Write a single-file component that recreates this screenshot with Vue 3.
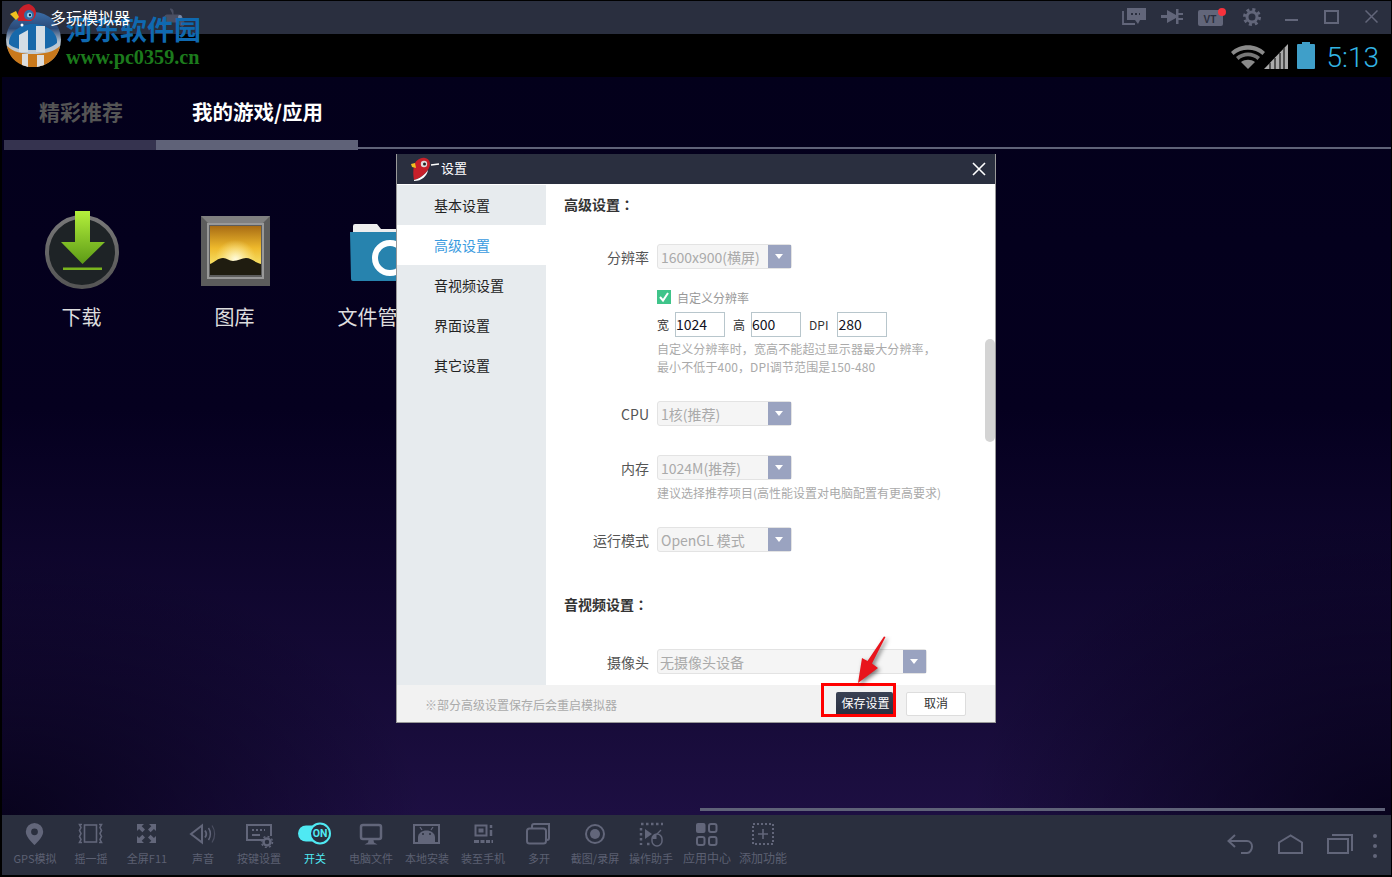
<script setup>
const menu = ['基本设置', '高级设置', '音视频设置', '界面设置', '其它设置']

const apps = ['下载', '图库', '文件管理器']

const tools = [
  { label: 'GPS模拟', svg: '<path fill-rule="evenodd" fill="#62667a" d="M27.5 3a8.7 8.7 0 0 1 8.7 8.7c0 5.6-8.7 13.3-8.7 13.3s-8.7-7.7-8.7-13.3A8.7 8.7 0 0 1 27.5 3zm0 5.4a3.4 3.4 0 1 0 0 6.8 3.4 3.4 0 0 0 0-6.8z"/>' },
  { label: '摇一摇', svg: '<g fill="none" stroke="#62667a" stroke-width="1.6"><rect x="21.5" y="5" width="12" height="17"/><path d="M19 4.500h-2.500l1.500 3-1.500 3 1.500 3-1.500 3 1.500 3-1.500 3H19M36 4.500h2.500l-1.500 3 1.500 3-1.500 3 1.500 3-1.500 3 1.500 3H36"/></g>' },
  { label: '全屏F11', svg: '<path fill="#62667a" d="M18 4h7l-2.300 2.300 3.300 3.300-2.600 2.600-3.300-3.300L18 11zM37 4h-7l2.300 2.300-3.300 3.300 2.600 2.600 3.300-3.300L37 11zM18 23h7l-2.300-2.300 3.300-3.300-2.600-2.600-3.300 3.300L18 16zM37 23h-7l2.300-2.300 -3.300-3.300 2.600-2.600 3.300 3.300L37 16z"/>' },
  { label: '声音', svg: '<g fill="none" stroke="#62667a"><path stroke-width="2" d="M16 14l11-8.500v17z"/><path stroke-width="1.800" d="M30 10.500c1.500 2 1.500 5 0 7"/><path stroke-width="1.500" d="M33.500 8c2.500 3.500 2.500 8.500 0 12"/><path stroke-width="1.200" stroke="#4a4e60" d="M37 5.500c3.500 5 3.500 12 0 17"/></g>' },
  { label: '按键设置', svg: '<g fill="none" stroke="#62667a" stroke-width="2"><path d="M33 20H16V5h24v11"/></g><path stroke="#62667a" stroke-width="2" stroke-dasharray="2 2" d="M21 10h13"/><path stroke="#62667a" stroke-width="2" d="M21 15h8"/><circle cx="36" cy="22" r="3.500" fill="none" stroke="#62667a" stroke-width="2.500"/><circle cx="36" cy="22" r="5.500" fill="none" stroke="#62667a" stroke-width="1.500" stroke-dasharray="2 2.300"/>' },
  { label: '开关', active: true, svg: '<rect x="11" y="5.500" width="24" height="16" rx="8" fill="#4fe9f3"/><circle cx="33" cy="13.500" r="10" fill="#2a2f3e" stroke="#4fe9f3" stroke-width="2"/><text x="33" y="17.300" text-anchor="middle" font-size="10.500" font-weight="700" font-family="Roboto, sans-serif" fill="#4fe9f3">ON</text>' },
  { label: '电脑文件', svg: '<rect x="18" y="5" width="20" height="14" rx="2" fill="none" stroke="#62667a" stroke-width="2.500"/><path fill="#62667a" d="M25.500 20h5l.5 2.500 3.500 2h-13l3.500-2z"/>' },
  { label: '本地安装', svg: '<rect x="15" y="5" width="25" height="18" fill="none" stroke="#62667a" stroke-width="2"/><path fill="#62667a" d="M19 17c.5-4 4-6.500 8.500-6.500s8 2.500 8.500 6.500v5H19z"/><path stroke="#62667a" stroke-width="1.300" d="M23 10l-2-3M32 10l2-3"/><circle cx="24" cy="14" r="1" fill="#2a2f3e"/><circle cx="31" cy="14" r="1" fill="#2a2f3e"/>' },
  { label: '装至手机', svg: '<rect x="20.500" y="5.500" width="11" height="10" fill="none" stroke="#62667a" stroke-width="2"/><rect x="23.500" y="8.500" width="5" height="4" fill="#62667a"/><path stroke="#62667a" stroke-width="2.500" d="M36 5v3M36 10v6"/><path stroke="#62667a" stroke-width="3" stroke-dasharray="5 1.500 4 1.500 4 1.500" d="M19 21.500h19"/>' },
  { label: '多开', svg: '<g fill="none" stroke="#62667a" stroke-width="2"><path d="M21 8V6a2 2 0 0 1 2-2h15v14a2 2 0 0 1-2 2h-1"/><rect x="16" y="8.500" width="19" height="15" rx="2.500"/></g>' },
  { label: '截图/录屏', svg: '<circle cx="28" cy="14" r="9" fill="none" stroke="#62667a" stroke-width="2"/><circle cx="28" cy="14" r="5" fill="#62667a"/>' },
  { label: '操作助手', svg: '<path stroke="#62667a" stroke-width="2.500" stroke-dasharray="2.500 2.500" fill="none" d="M18 4h22M18 8v17M24 24h4"/><path fill="#62667a" d="M22 9l7 5-7 5z"/><rect x="29" y="14" width="10" height="12" rx="5" fill="#2a2f3e" stroke="#62667a" stroke-width="1.500"/><path fill="#62667a" d="M29.500 19v-1a4.500 4.500 0 0 1 4-4.300V19z"/><path stroke="#62667a" stroke-width="1.300" d="M34 14l4-4"/>' },
  { label: '应用中心', big: true, svg: '<rect x="17" y="3" width="9.500" height="10" rx="2" fill="#62667a"/><g fill="none" stroke="#62667a" stroke-width="2"><rect x="30" y="4" width="7.500" height="8" rx="2"/><rect x="18" y="17" width="7.500" height="8" rx="2"/><rect x="30" y="17" width="7.500" height="8" rx="2"/></g>' },
  { label: '添加功能', big: true, svg: '<rect x="18" y="4" width="20" height="20" fill="none" stroke="#62667a" stroke-width="2" stroke-dasharray="2 2"/><path stroke="#62667a" stroke-width="1.600" d="M28 9v10M23 14h10"/>' }
]
</script>

<template>
  <div class="app">
    <header class="titlebar">
      <span class="app-name">多玩模拟器</span>
      <svg class="pad" width="24" height="20" viewBox="0 0 24 20">
        <path fill="#4a4f63" d="M6 7h12c3 0 5 5 5 9 0 3-3 3-5 0l-1-2H7l-1 2c-2 3-5 3-5 0 0-4 2-9 5-9zM12 7V3c0-2-2-2-3-2" stroke="#4a4f63"/>
        <circle cx="19" cy="9" r="2" fill="#7b8ba8"/>
      </svg>
      <div class="win-ctl">
        <svg width="24" height="17" viewBox="0 0 24 17">
          <path fill="none" stroke="#62667a" stroke-width="1.800" d="M1 3v13h12"/>
          <path fill="#62667a" d="M5 0h19v12h-6l-2 4-3-4H5z"/>
          <path stroke="#2a2f3f" stroke-width="2" stroke-dasharray="2 2" d="M9 6h9"/>
        </svg>
        <svg class="m15" width="22" height="17" viewBox="0 0 22 17">
          <path fill="#62667a" d="M0 7h6V2l9 5V1h2.500v15H15v-6l-9 5v-5H0zM17.500 5H22v2h-4.500zM17.500 10H22v2h-4.500z"/>
        </svg>
        <svg class="m15" width="28" height="18" viewBox="0 0 28 18">
          <rect y="2" width="25" height="16" rx="2" fill="#62667a"/>
          <text x="12" y="15" text-anchor="middle" font-size="10" font-weight="700" font-family="Liberation Sans, sans-serif" fill="#2a2f3f">VT</text>
          <circle cx="24" cy="4" r="4" fill="#f6323c"/>
        </svg>
        <svg class="m17" width="18" height="18" viewBox="0 0 18 18">
          <circle cx="9" cy="9" r="5" fill="none" stroke="#62667a" stroke-width="3"/>
          <circle cx="9" cy="9" r="7.500" fill="none" stroke="#62667a" stroke-width="3" stroke-dasharray="3 2.900"/>
        </svg>
        <span class="min"></span>
        <span class="max"></span>
        <svg class="close" width="13" height="13" viewBox="0 0 13 13">
          <path stroke="#62667a" stroke-width="1.500" d="M.5.5l12 12M12.500.5l-12 12"/>
        </svg>
      </div>
    </header>

    <div class="statusbar">
      <svg width="57" height="28" viewBox="0 0 57 28">
        <path fill="#8a8a8a" d="M0 10C9 1 25 1 34 10l-2.500 3C24 6 10 6 2.500 13z"/>
        <path fill="#777" d="M5 15c7-6 17-6 24 0l-2.500 3c-5-5-14-5-19 0z"/>
        <path fill="#8a8a8a" d="M10 20c4-3 10-3 14 0l-7 7z"/>
        <path fill="#aaa" d="M33 27L57 2v25z"/>
        <path stroke="#333" stroke-width="1.500" d="M39 27v-6M44 27V16M49 27V11M53 27V6"/>
      </svg>
      <svg class="battery" width="18" height="27" viewBox="0 0 18 27">
        <path fill="#3f9fc9" d="M5 0h8v2h4a1 1 0 0 1 1 1v23a1 1 0 0 1-1 1H1a1 1 0 0 1-1-1V3a1 1 0 0 1 1-1h4z"/>
      </svg>
      <span class="clock">5:13</span>
    </div>

    <main class="android">
      <nav class="tabs">
        <div class="tab tab-off">精彩推荐</div>
        <div class="tab tab-on">我的游戏/应用</div>
        <div class="tab-line"></div>
      </nav>

      <div class="desktop">
        <div v-for="(name, i) in apps" :key="name" class="desk-app">
          <svg v-if="i === 0" width="80" height="80" viewBox="0 0 80 80">
            <defs>
              <linearGradient id="ring" x1="0" y1="0" x2="0" y2="1">
                <stop offset="0" stop-color="#777"/>
                <stop offset="1" stop-color="#555"/>
              </linearGradient>
              <linearGradient id="arrow" x1="0" y1="0" x2="0" y2="1">
                <stop offset="0" stop-color="#b4f03c"/>
                <stop offset="1" stop-color="#5c9a16"/>
              </linearGradient>
            </defs>
            <circle cx="40" cy="42" r="35" fill="#1e2326" stroke="url(#ring)" stroke-width="4"/>
            <path fill="url(#arrow)" d="M33 1h15v31h15L40.500 54 19 32h14z"/>
            <rect x="21" y="57.500" width="39" height="2.500" fill="#7ab51e"/>
          </svg>
          <svg v-else-if="i === 1" width="80" height="80" viewBox="0 0 80 80">
            <defs>
              <linearGradient id="sky" x1="0" y1="0" x2="0" y2="1">
                <stop offset="0" stop-color="#a86c14"/>
                <stop offset=".45" stop-color="#eeb92c"/>
                <stop offset=".75" stop-color="#f6dc60"/>
              </linearGradient>
              <radialGradient id="sun" cx=".5" cy=".68" r=".4">
                <stop offset="0" stop-color="#fffbe0"/>
                <stop offset="1" stop-color="#fff3a0" stop-opacity="0"/>
              </radialGradient>
            </defs>
            <rect x="6" y="6" width="69" height="70" fill="#5c5c5c"/>
            <path fill="#808080" d="M6 6h69l-9 9H15z"/>
            <rect x="13" y="14" width="55" height="54" fill="none" stroke="#999" stroke-width="2"/>
            <rect x="15" y="16" width="51" height="49" fill="url(#sky)"/>
            <rect x="15" y="16" width="51" height="49" fill="url(#sun)"/>
            <path fill="#1f1c10" d="M15 54c5-2 8-6 13-6 4 0 6 3 10 3 5 0 9-3 13-3 5 0 10 5 15 6v11H15z"/>
          </svg>
          <svg v-else width="80" height="80" viewBox="0 0 80 80">
            <path fill="#eee" d="M5 22v-6a2 2 0 0 1 2-2h22l4 5h30v5H5z"/>
            <path fill="#2783ae" d="M2 22h76v47a2 2 0 0 1-2 2H5a2 2 0 0 1-2-2z"/>
            <circle cx="42" cy="48" r="15" fill="none" stroke="#fff" stroke-width="6"/>
          </svg>
          <span class="desk-label">{{ name }}</span>
        </div>
      </div>

      <div class="pager"></div>
    </main>

    <footer class="toolbar">
      <div class="tools">
        <div v-for="t in tools" :key="t.label" class="tool" :class="{ on: t.active, big: t.big }">
          <svg width="56" height="28" viewBox="0 0 56 28" v-html="t.svg"></svg>
          <span>{{ t.label }}</span>
        </div>
      </div>
      <div class="nav-keys">
        <svg width="27" height="20" viewBox="0 0 27 20">
          <path fill="none" stroke="#62667a" stroke-width="2" d="M8 1L1.500 7 8 13M2 7h18c3 0 5 2.500 5 5.500S23 19 20 19h-6"/>
        </svg>
        <svg class="k-home" width="25" height="20" viewBox="0 0 25 20">
          <path fill="none" stroke="#62667a" stroke-width="2" d="M12.500 1.500L1 8.500V19h23V8.500z"/>
        </svg>
        <svg class="k-recent" width="26" height="20" viewBox="0 0 26 20">
          <path fill="none" stroke="#62667a" stroke-width="2" d="M5 1h20v16"/>
          <rect x="1" y="5" width="20" height="14" fill="none" stroke="#62667a" stroke-width="2"/>
        </svg>
        <div class="dots"><i></i><i></i><i></i></div>
      </div>
    </footer>

    <!-- 水印盖在标题栏上 -->
    <div class="watermark">
      <svg class="wm-logo" width="58" height="57" viewBox="0 0 58 57">
        <defs>
          <linearGradient id="cap" x1="0" y1="0" x2="0" y2="1">
            <stop offset="0" stop-color="#3a6da8"/>
            <stop offset=".3" stop-color="#2c4a78"/>
            <stop offset=".55" stop-color="#b9c6d2"/>
            <stop offset="1" stop-color="#c8d0d8"/>
          </linearGradient>
        </defs>
        <circle cx="28.500" cy="28.500" r="27.500" fill="url(#cap)"/>
        <path fill="#c9791c" d="M2 35c6 6 15 8 26 8s21-2 27-8c-2 12-13 21-27 21S4 47 2 35z"/>
        <path fill="#1768aa" d="M4 33c-1-10 10-20 24-20s25 9 24 19c-6 5-14 7-24 7S9 38 4 33z"/>
        <path fill="#d4dde5" d="M14 24l9-5v22h-9zM31 15h9v26h-9z"/>
        <path fill="#ddd" d="M17 43h6v13l-6-2zM32 44h7v10l-7 2z"/>
        <circle cx="17" cy="14" r="1.500" fill="#fff"/>
      </svg>
      <div class="wm-text">
        <span class="wm-cn">河东软件园</span>
        <span class="wm-url">www.pc0359.cn</span>
      </div>
    </div>

    <svg class="t-bird" width="28" height="20" viewBox="0 0 28 20">
      <path fill="#c8202a" d="M9 10C10 5 15 1 20 1c3 1 7 4 7 9 0 3-2 6-5 8H9z"/>
      <path fill="#f0c020" d="M1 11l6-3 3 6-3 3z"/>
      <circle cx="20" cy="12" r="5" fill="#2f6fa8"/>
      <circle cx="20.500" cy="12" r="2.500" fill="#9fd0ee"/>
      <circle cx="21" cy="12" r="1.200" fill="#123"/>
    </svg>

    <section class="dialog">
      <div class="dlg-head">
        <svg width="30" height="24" viewBox="0 0 30 24">
          <path fill="#c8202a" d="M3 9c1-5 6-9 11-8 3 .5 5 3 5 6 0 6-8 14-16 16C2 18 2 13 3 9z"/>
          <path fill="#f0c020" d="M0 7l4-1 1 5-4-1z"/>
          <path fill="#fff" d="M3 23c5-1 11-5 14-10-1 6-6 11-14 11z"/>
          <circle cx="13" cy="7" r="3.200" fill="#ddd"/>
          <circle cx="13.500" cy="7" r="1.500" fill="#222"/>
          <path stroke="#fff" stroke-width="1.500" d="M20 8l8-1"/>
        </svg>
        <span class="dlg-title">设置</span>
        <svg class="dlg-close" width="14" height="14" viewBox="0 0 14 14">
          <path stroke="#fff" stroke-width="1.600" d="M1 1l12 12M13 1L1 13"/>
        </svg>
      </div>

      <div class="dlg-body">
        <ul class="side">
          <li v-for="(m, i) in menu" :key="m" :class="{ cur: i === 1 }">{{ m }}</li>
        </ul>

        <div class="pane">
          <h4 class="h-first">高级设置<span class="colon">：</span></h4>

          <div class="row r-res">
            <label>分辨率</label>
            <div class="sel"><span>1600x900(横屏)</span><b></b></div>
          </div>

          <div class="sub">
            <div class="check">
              <svg width="14" height="14" viewBox="0 0 14 14">
                <rect width="14" height="14" fill="#3fc48a"/>
                <path fill="none" stroke="#fff" stroke-width="2" d="M3 7l3 3.500L11 3"/>
              </svg>
              <span>自定义分辨率</span>
            </div>
            <div class="size-row">
              <span>宽</span><input class="num" value="1024" readonly>
              <span>高</span><input class="num" value="600" readonly>
              <span class="dpi">DPI</span><input class="num" value="280" readonly>
            </div>
            <p class="hint h-res">自定义分辨率时，宽高不能超过显示器最大分辨率，<br>最小不低于400，DPI调节范围是150-480</p>
          </div>

          <div class="row r-cpu">
            <label>CPU</label>
            <div class="sel"><span>1核(推荐)</span><b></b></div>
          </div>

          <div class="row r-mem">
            <label>内存</label>
            <div class="sel"><span>1024M(推荐)</span><b></b></div>
          </div>
          <p class="hint sub h-mem">建议选择推荐项目(高性能设置对电脑配置有更高要求)</p>

          <div class="row r-mode">
            <label>运行模式</label>
            <div class="sel"><span>OpenGL 模式</span><b></b></div>
          </div>

          <h4 class="h-av">音视频设置<span class="colon">：</span></h4>

          <div class="row r-cam">
            <label>摄像头</label>
            <div class="sel wide"><span>无摄像头设备</span><b></b></div>
          </div>

          <div class="thumb"></div>
        </div>
      </div>

      <div class="dlg-foot">
        <span class="note">※部分高级设置保存后会重启模拟器</span>
        <button class="btn-save">保存设置</button>
        <button class="btn-cancel">取消</button>
      </div>
    </section>

    <!-- 红框和箭头标注 -->
    <svg class="mark" width="80" height="90" viewBox="0 0 80 90">
      <rect x="1.500" y="48.500" width="72" height="31" fill="none" stroke="#f00" stroke-width="3"/>
      <path class="mark-arrow" fill="#e8141c" d="M64.500 1L51 27.500l6 4.500L37 47l4-25 5.500 3L63 .5z"/>
    </svg>
  </div>
</template>

<style>
html, body {
  margin: 0;
  background: #000;
}
</style>

<style scoped>
.app {
  position: relative;
  width: 1392px;
  height: 877px;
  box-sizing: border-box;
  padding: 1px 1px 2px 2px;
  background: #000;
  display: flex;
  flex-direction: column;
  overflow: hidden;
  font-family: "Noto Sans CJK SC", "Noto Sans", sans-serif;
}

.titlebar {
  height: 33px;
  flex: none;
  background: #2a2f3f;
  display: flex;
  align-items: center;
  padding-left: 48px;
}

.app-name {
  position: relative;
  z-index: 2;
  margin-bottom: 2px;
  font-size: 16px;
  color: #fff;
}

.t-bird {
  position: absolute;
  left: 9px;
  top: 3px;
}

.pad {
  margin-left: 31px;
}

.win-ctl {
  margin: -2px 0 0 auto;
  padding-right: 13px;
  display: flex;
  align-items: center;
}

.m15 {
  margin-left: 15px;
}

.m17 {
  margin-left: 17px;
}

.min {
  width: 13px;
  height: 2px;
  margin: 7px 0 0 24px;
  background: #62667a;
}

.max {
  width: 11px;
  height: 10px;
  margin-left: 26px;
  border: 2px solid #62667a;
}

.close {
  margin-left: 26px;
}

.statusbar {
  height: 43px;
  flex: none;
  display: flex;
  align-items: center;
  justify-content: flex-end;
  padding-right: 12px;
}

.battery {
  margin-left: 9px;
}

.clock {
  margin: 3px 0 0 12px;
  font-family: Roboto, sans-serif;
  font-weight: 300;
  font-size: 28px;
  color: #33b5e5;
}

.android {
  flex: 1;
  min-height: 0;
  display: flex;
  flex-direction: column;
  padding-left: 2px;
  background:
    radial-gradient(ellipse 420px 260px at 0 100%, rgba(3, 0, 20, 0.8), transparent),
    radial-gradient(ellipse 420px 300px at 100% 100%, rgba(3, 0, 20, 0.8), transparent),
    linear-gradient(180deg, #03001b 0, #05001f 45%, #1d0f42 100%);
}

.tabs {
  display: flex;
  height: 73px;
  flex: none;
}

.tab {
  box-sizing: border-box;
  padding: 19px 0 0 35px;
  font-size: 20.5px;
  font-weight: 700;
  line-height: 30px;
  border-bottom: 10px solid #35334f;
}

.tab-off {
  width: 152px;
  font-size: 21px;
  color: #555;
}

.tab-on {
  width: 202px;
  padding-left: 36px;
  color: #fff;
  border-bottom-color: #5f6278;
}

.tab-line {
  flex: 1;
  height: 72px;
  box-sizing: border-box;
  border-bottom: 2px solid #5f6278;
}

.desktop {
  flex: 1;
  display: flex;
  padding: 60px 0 0 1px;
}

.desk-app {
  width: 153px;
  display: flex;
  flex-direction: column;
  align-items: center;
}

.desk-label {
  margin-top: 12px;
  font-size: 20px;
  line-height: 30px;
  color: #ddd;
  white-space: nowrap;
}

.pager {
  align-self: flex-end;
  flex: none;
  width: 685px;
  height: 3px;
  margin: 0 6px 4px 0;
  background: #5f6278;
}

.toolbar {
  height: 60px;
  flex: none;
  background: #2a2f3e;
  display: flex;
  justify-content: space-between;
}

.tools {
  display: flex;
  padding: 5px 0 0 5px;
}

.tool {
  width: 56px;
  display: flex;
  flex-direction: column;
  align-items: center;
  font-size: 11px;
  color: #5c6072;
}

.tool.big {
  font-size: 12px;
}

.tool svg {
  display: block;
}

.tool span {
  margin-top: 2px;
  line-height: 16px;
  white-space: nowrap;
}

.tool.on {
  color: #4fe9f3;
}

.nav-keys {
  display: flex;
  align-items: flex-start;
  padding: 19px 14px 0 0;
}

.k-home {
  margin-left: 24px;
}

.k-recent {
  margin-left: 24px;
}

.dots {
  margin-left: 20px;
  display: flex;
  flex-direction: column;
  gap: 6px;
}

.dots i {
  width: 4px;
  height: 4px;
  border-radius: 50%;
  background: #62667a;
}

.watermark {
  position: absolute;
  left: 5px;
  top: 11px;
  display: flex;
  pointer-events: none;
}

.wm-text {
  display: flex;
  flex-direction: column;
  margin: -1px 0 0 3px;
}

.wm-cn {
  font-size: 27px;
  font-weight: 700;
  line-height: 38px;
  color: #0f69b0;
}

.wm-url {
  font-family: "Liberation Serif", serif;
  font-size: 20.2px;
  font-weight: 700;
  line-height: 18px;
  color: #1c7a1c;
}

.dialog {
  position: absolute;
  left: 396px;
  top: 154px;
  width: 600px;
  height: 569px;
  box-sizing: border-box;
  border: 1px solid #999;
  border-top: 0;
  background: #fff;
  display: flex;
  flex-direction: column;
}

.dlg-head {
  height: 30px;
  flex: none;
  background: #2a2f3f;
  display: flex;
  align-items: center;
  padding: 0 9px 0 14px;
}

.dlg-title {
  margin: 0 0 3px;
  font-size: 13px;
  color: #fff;
}

.dlg-close {
  margin-left: auto;
}

.dlg-body {
  height: 500px;
  flex: none;
  margin-top: 1px;
  display: flex;
  overflow: hidden;
}

.side {
  width: 149px;
  flex: none;
  margin: 0;
  padding: 0;
  list-style: none;
  background: #e7ebee;
}

.side li {
  height: 40px;
  padding-left: 37px;
  font-size: 14px;
  line-height: 40px;
  color: #222;
}

.side li.cur {
  background: #fff;
  color: #3a9be0;
}

.pane {
  position: relative;
  flex: 1;
  padding: 9px 0 0 18px;
  overflow: hidden;
}

h4 {
  margin: 0;
  font-size: 14px;
  line-height: 20px;
  font-weight: 700;
  color: #333;
}

.colon {
  font-family: "Noto Sans CJK TC", sans-serif;
}

.row {
  display: flex;
  align-items: center;
  height: 25px;
}

.row label {
  width: 85px;
  margin-right: 8px;
  text-align: right;
  font-size: 14px;
  color: #555;
}

.sel {
  position: relative;
  box-sizing: border-box;
  width: 135px;
  height: 25px;
  padding-left: 3px;
  border: 1px solid #e3e3e3;
  border-radius: 3px;
  background: #f5f5f5;
  font-size: 14px;
  line-height: 25px;
  color: #aaa;
}

.sel.wide {
  width: 270px;
  padding-left: 2px;
}

.sel b {
  position: absolute;
  right: 0;
  top: 0;
  width: 23px;
  height: 23px;
  background: #9aa3c0;
}

.sel b::after {
  content: "";
  position: absolute;
  left: 7px;
  top: 9px;
  border: 4.500px solid transparent;
  border-top: 5px solid #fff;
  border-bottom: 0;
}

.r-res {
  margin-top: 30px;
}

.sub {
  padding-left: 93px;
}

.check {
  display: flex;
  align-items: center;
  height: 14px;
  margin-top: 21px;
  font-size: 12px;
  color: #999;
}

.check span {
  margin-left: 6px;
}

.size-row {
  display: flex;
  align-items: center;
  height: 25px;
  margin-top: 8px;
  font-size: 12px;
  color: #333;
}

.num {
  box-sizing: border-box;
  width: 50px;
  height: 25px;
  margin: 0 8px 0 6px;
  padding: 0 0 2px;
  border: 1px solid #b8c6cc;
  outline: 0;
  font-family: inherit;
  font-size: 14px;
  color: #112;
}

.dpi {
  margin-right: 3px;
}

.hint {
  margin: 3px 0 0;
  font-size: 12px;
  line-height: 18px;
  letter-spacing: 0.12px;
  color: #aaa;
}

.r-cpu {
  margin-top: 25px;
}

.r-mem {
  margin-top: 29px;
}

.h-mem {
  margin-top: 4px;
  letter-spacing: 0;
}

.r-mode {
  margin-top: 25px;
}

.h-av {
  margin-top: 42px;
}

.r-cam {
  margin-top: 35px;
}

.thumb {
  position: absolute;
  right: 0;
  top: 154px;
  width: 10px;
  height: 103px;
  border-radius: 5px;
  background: #d4d4d4;
}

.dlg-foot {
  flex: 1;
  background: #f2f2f2;
  display: flex;
  align-items: center;
  padding: 0 29px 0 28px;
}

.note {
  margin: 2px auto 0 0;
  font-size: 12px;
  color: #aaa;
}

.btn-save {
  width: 57px;
  height: 24px;
  padding: 0 0 3px 2px;
  border: 0;
  border-radius: 2px;
  background: linear-gradient(180deg, #3a4254, #272d3f);
  font-family: inherit;
  font-size: 12px;
  color: #fff;
}

.btn-cancel {
  width: 60px;
  height: 24px;
  margin-left: 13px;
  padding: 0 0 3px;
  border: 1px solid #ddd;
  border-radius: 2px;
  background: #fff;
  font-family: inherit;
  font-size: 12px;
  color: #333;
}

.mark {
  position: absolute;
  left: 821px;
  top: 636px;
  pointer-events: none;
}

.mark-arrow {
  filter: drop-shadow(2px 2px 2px rgba(0, 0, 0, 0.5));
}
</style>
